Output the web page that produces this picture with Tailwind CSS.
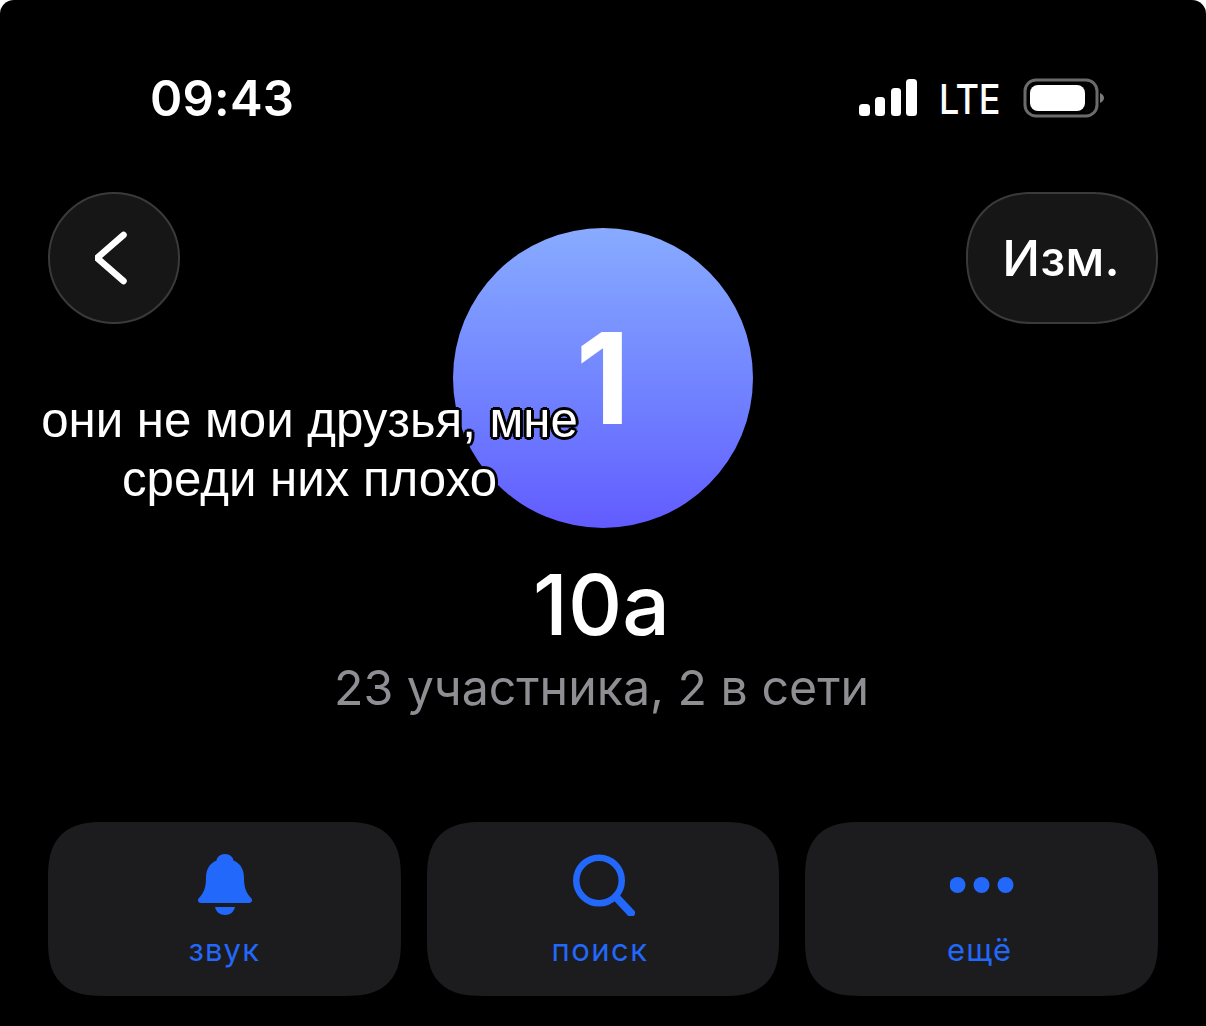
<!DOCTYPE html>
<html><head><meta charset="utf-8"><script src="https://cdn.jsdelivr.net/npm/@tailwindcss/browser@4"></script></head>
<body class="bg-white m-0">
<div class="relative w-[1206px] h-[1026px] bg-black rounded-t-[14px] overflow-hidden text-white pt-[73px] font-['Inter','Roboto',sans-serif]">
  <!-- status bar -->
  <div class="flex items-center justify-between h-[50px] pl-[150px] pr-[101px]">
    <span class="text-[49px] leading-[50px] font-semibold tracking-[0.2px] mt-[2px]">09:43</span>
    <div class="flex items-center">
      <svg width="58" height="38" viewBox="0 0 58 38" fill="#fff"><rect x="0" y="25" width="11" height="12" rx="3.5"/><rect x="16" y="18" width="10" height="19" rx="3.5"/><rect x="32" y="9" width="10" height="28" rx="3.5"/><rect x="47" y="0" width="11" height="37" rx="3.5"/></svg>
      <span class="ml-[22px] text-[41px] leading-[50px] font-medium tracking-[-0.5px] scale-x-[.88] origin-left w-[62px] mt-[1px]">LTE</span>
      <svg class="ml-[22px]" width="82" height="40" viewBox="0 0 82 40"><rect x="2" y="2" width="72" height="36" rx="11" fill="none" stroke="#6b6b6b" stroke-width="3"/><rect x="7" y="7" width="55" height="26" rx="8" fill="#fff"/><path d="M77 15 Q81 17 81 20 Q81 23 77 25Z" fill="#7a7a7a"/></svg>
    </div>
  </div>
  <!-- nav -->
  <div class="flex justify-between items-start px-[48px] mt-[69px]">
    <div class="w-[132px] h-[132px] rounded-full bg-[#161616] border-2 border-[#3a3a3a] flex items-center justify-center">
      <svg width="36" height="60" viewBox="0 0 36 60" class="mr-[3px]" fill="none" stroke="#fff" stroke-width="6.500" stroke-linecap="round" stroke-linejoin="round"><path d="M28.500 7 L2 30 L28.500 53"/></svg>
    </div>
    <div class="w-[192px] h-[132px] rounded-[66px] [corner-shape:superellipse(1.15)] bg-[#161616] border-2 border-[#3a3a3a] flex items-center justify-center text-[50px] font-medium pr-[2px]">Изм.</div>
  </div>
  <!-- avatar -->
  <div class="absolute left-[453px] top-[228px] w-[300px] h-[300px] rounded-full bg-gradient-to-b from-[#88abff] to-[#625bff] flex items-center justify-center text-[126px] font-bold">1</div>
  <!-- title -->
  <div class="mt-[236px] text-center">
    <div class="text-[84px] leading-[90px] font-medium pr-[3px]">10а</div>
    <div class="text-[48.300px] leading-[60px] mt-[8px] text-[#8e8e93] pr-[3px]">23 участника, 2 в сети</div>
  </div>
  <!-- caption -->
  <div class="absolute left-[38px] top-[390px] w-[543px] text-center text-[49.200px] leading-[59px] text-white font-['Liberation_Sans',sans-serif] [text-shadow:3px_0_0_#000,-3px_0_0_#000,0_3px_0_#000,0_-3px_0_#000,2px_2px_0_#000,-2px_-2px_0_#000,2px_-2px_0_#000,-2px_2px_0_#000]">они не мои друзья, мне среди них плохо</div>
  <!-- actions -->
  <div class="absolute left-[48px] right-[48px] top-[822px] grid grid-cols-3 gap-[26px] text-[#2268fa]">
    <div class="h-[174px] rounded-[56px] [corner-shape:superellipse(1.4)] bg-[#1c1c1e] flex flex-col items-center pt-[32px]">
      <svg class="ml-[2px]" width="56" height="62" viewBox="0 0 56 62" fill="#2268fa"><path d="M28 0c5 0 8 3 8.500 6.500C44 9.500 47 16 47 24c0 9 2 15 7 20 2 2 1 5-2 5H4c-3 0-4-3-2-5 5-5 7-11 7-20 0-8 3-14.500 10.500-17.500C20 3 23 0 28 0z"/><path d="M18 53h20c-1 5-5 8-10 8s-9-3-10-8z"/></svg>
      <span class="text-[31px] leading-[36px] mt-[16px] tracking-[1.200px]">звук</span>
    </div>
    <div class="h-[174px] rounded-[56px] [corner-shape:superellipse(1.4)] bg-[#1c1c1e] flex flex-col items-center pt-[32px]">
      <svg width="64" height="62" viewBox="0 0 64 62" fill="none" stroke="#2268fa"><circle cx="28" cy="26.500" r="22.750" stroke-width="6.500"/><path d="M45 43 L60 59" stroke-width="8" stroke-linecap="round"/></svg>
      <span class="text-[31px] leading-[36px] mt-[16px] tracking-[1.500px] mr-[6px]">поиск</span>
    </div>
    <div class="h-[174px] rounded-[56px] [corner-shape:superellipse(1.4)] bg-[#1c1c1e] flex flex-col items-center pt-[32px]">
      <svg width="64" height="62" viewBox="0 0 64 62" fill="#2268fa"><circle cx="7.500" cy="31" r="8"/><circle cx="31.500" cy="31" r="8"/><circle cx="55.500" cy="31" r="8"/></svg>
      <span class="text-[31px] leading-[36px] mt-[16px] tracking-[1.200px] mr-[4px]">ещё</span>
    </div>
  </div>
</div>
</body></html>
